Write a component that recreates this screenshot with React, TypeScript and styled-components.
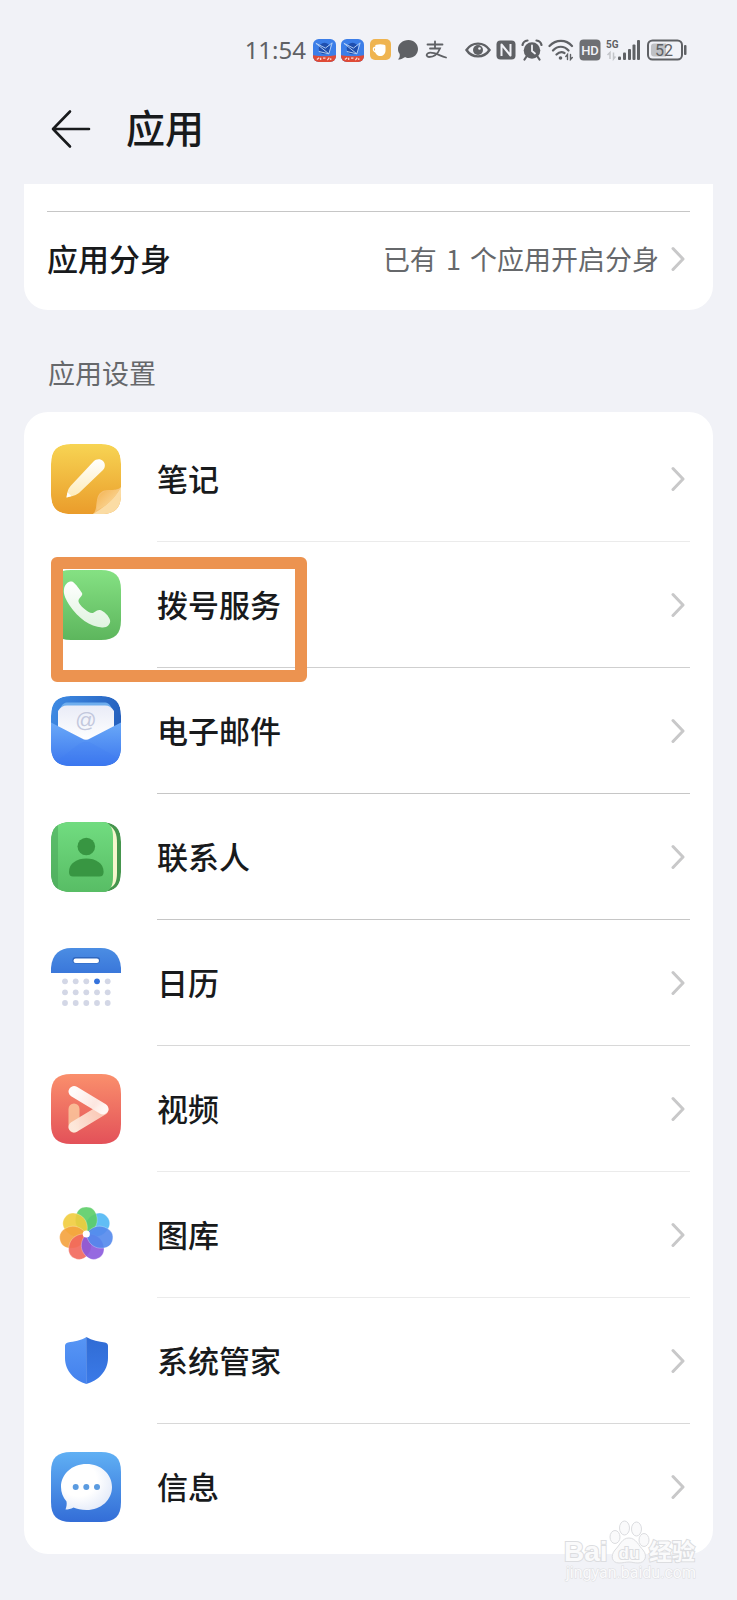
import React from "react";
import styled, { createGlobalStyle } from "styled-components";

const GlobalStyle = createGlobalStyle`
  *, *::before, *::after { box-sizing: border-box; }
  body {
    margin: 0;
    background: #f1f2f7;
    color: #181a1c;
    font-family: "Noto Sans CJK SC", "Noto Sans", sans-serif;
  }
`;

const Page = styled.div`
  position: relative;
  display: flex;
  flex-direction: column;
  padding: 0 24px 46px;
`;

const StatusBar = styled.div`
  display: flex;
  align-items: center;
  justify-content: flex-end;
  gap: 18px;
  padding-top: 32px;
  padding-right: 26px;
  height: 68px;
  color: #5f6165;
`;

const StatusGroup = styled.div`
  display: flex;
  align-items: center;
  gap: 5px;
  svg { display: block; flex: none; }
`;

const Clock = styled.time`
  margin-right: 2px;
  font-family: "Noto Sans", sans-serif;
  font-size: 24px;
  line-height: 36px;
`;

const Header = styled.header`
  display: flex;
  align-items: center;
  gap: 34px;
  height: 116px;
  padding: 6px 0 0 26px;
`;

const BackButton = styled.button`
  display: flex;
  padding: 0;
  border: 0;
  background: none;
  color: #181a1c;
`;

const Title = styled.h1`
  margin: 0;
  padding-bottom: 6px;
  font-size: 39px;
  line-height: 56px;
  font-weight: 500;
`;

const Card = styled.section<{ $clipped?: boolean }>`
  background: #fff;
  border-radius: ${(p) => (p.$clipped ? "0 0 24px 24px" : "24px")};
  padding: ${(p) => (p.$clipped ? "27px 23px 4px" : "4px 23px")};
`;

const CloneRow = styled.a`
  display: flex;
  align-items: center;
  height: 95px;
  padding-right: 5px;
  border-top: 1px solid #c6c6c6;
  color: inherit;
  text-decoration: none;
`;

const RowLabel = styled.span`
  flex: 1;
  padding-bottom: 2px;
  font-size: 31px;
  line-height: 44px;
  font-weight: 500;
`;

const RowValue = styled.span`
  margin-right: 12px;
  color: #66686b;
  font-size: 27px;
  line-height: 40px;
`;

const Count = styled.span`
  padding: 0 3px;
`;

const SectionTitle = styled.h2`
  margin: 0;
  padding: 43px 24px 19px;
  color: #66686b;
  font-size: 27px;
  line-height: 40px;
  font-weight: 400;
`;

const List = styled.ul`
  margin: 0;
  padding: 0;
  list-style: none;
`;

const Item = styled.li`
  position: relative;
`;

const AppLink = styled.a`
  display: flex;
  align-items: center;
  gap: 36px;
  height: 126px;
  padding-left: 4px;
  color: inherit;
  text-decoration: none;
  > svg { display: block; flex: none; }
`;

const RowBody = styled.span<{ $line: string }>`
  display: flex;
  flex: 1;
  align-items: center;
  align-self: stretch;
  padding-right: 5px;
  border-bottom: 1px solid ${(p) => p.$line};
`;

const Highlight = styled.span`
  position: absolute;
  top: 15px;
  left: 4px;
  width: 256px;
  height: 125px;
  border: 12px solid #ec9350;
  border-radius: 6px;
  z-index: 1;
  pointer-events: none;
`;

const Watermark = styled.svg`
  position: absolute;
  right: 36px;
  bottom: 16px;
  pointer-events: none;
`;

const Chevron = () => (
  <svg width="14" height="26" viewBox="0 0 14 26" fill="none" stroke="#c8c8c9" strokeWidth="3" strokeLinecap="round" strokeLinejoin="round" aria-hidden="true">
    <path d="M2 2.500 12 13 2 23.500" />
  </svg>
);

const TILE = "M20 0H50C64 0 70 6 70 20V50C70 64 64 70 50 70H20C6 70 0 64 0 50V20C0 6 6 0 20 0Z";

const Gradient = ({ id, from, to, x2 = 0, y2 = 1 }: { id: string; from: string; to: string; x2?: number; y2?: number }) => (
  <linearGradient id={id} x1="0" y1="0" x2={x2} y2={y2}>
    <stop offset="0" stopColor={from} />
    <stop offset="1" stopColor={to} />
  </linearGradient>
);

const Tile = ({ children }: { children: React.ReactNode }) => (
  <svg width="70" height="70" viewBox="0 0 70 70" aria-hidden="true">
    {children}
  </svg>
);

const NotesIcon = () => (
  <Tile>
    <defs>
      <Gradient id="nBg" from="#f7d453" to="#ea9c2b" />
      <Gradient id="nPen" from="#ffffff" to="#fdebb8" />
      <Gradient id="nFold" from="#f3b04c" to="#fde2ae" x2={1} />
      <clipPath id="nClip"><path d={TILE} /></clipPath>
    </defs>
    <g clipPath="url(#nClip)">
      <path d={TILE} fill="url(#nBg)" />
      <path d="M42 70C46 66 45 60 46 56C47 49 51 46 58 46C63 46 67 46 70 43V70Z" fill="#f5c070" />
      <path d="M42 70C51 65 64 55 70 43V70Z" fill="#fbdca4" />
      <path d="M46 66C45 55 48 48 58 46C64 46 67 46 69 44C64 55 55 62 46 66Z" fill="url(#nFold)" />
    </g>
    <path d="M15.500 53.500C16.500 47 17 45 20 41.500L42.500 17.500C45 14.800 49.500 14.500 52 17C54.500 19.500 54.500 23.500 52 26L28.500 48.500C25 51.500 22 52 15.500 53.500Z" fill="url(#nPen)" />
    <path d="M15.500 53.500L16.500 48.500L20.500 52Z" fill="#fff" />
  </Tile>
);

const DialerIcon = () => (
  <Tile>
    <defs>
      <Gradient id="dBg" from="#85e183" to="#5db65d" />
      <Gradient id="dH" from="#ffffff" to="#dff3df" />
    </defs>
    <path d={TILE} fill="url(#dBg)" />
    <path d="M13 19C14 13 19 10.500 22 12C25 14 29 20 31 23C32.500 26 27 28 27.500 31.500C28 35 37 43 41 43C44 43 45 39.500 49 40C53 41 58 46 59 50C60 54 56 58 51 57.500C39 56.500 27 48 19 36C15 30 12 24 13 19Z" fill="url(#dH)" />
  </Tile>
);

const MailIcon = () => (
  <Tile>
    <defs>
      <Gradient id="mBg" from="#3f8ce5" to="#2560bd" x2={1} y2={0.3} />
      <Gradient id="mFront" from="#6aa9f8" to="#3b76ee" />
      <Gradient id="mPaper" from="#e9ecf7" to="#ffffff" />
      <clipPath id="mClip"><path d={TILE} /></clipPath>
    </defs>
    <g clipPath="url(#mClip)">
      <path d={TILE} fill="url(#mBg)" />
      <path d="M9 13C11 8 13 6.500 17 6.500H53C57 6.500 59 8 61 13V32H9Z" fill="#6faeee" />
      <path d="M7 15C9 11.500 12 9.500 16 9.500H54C58 9.500 61 11.500 63 15V45H7Z" fill="url(#mPaper)" />
      <path d="M0 26.500L31 42.500Q35 45 39 42.500L70 26.500V70H0Z" fill="url(#mFront)" />
      <path d="M0 70L28 48Q35 43.500 42 48L70 64V70Z" fill="#3c78f3" opacity=".18" />
    </g>
    <text x="35" y="31" textAnchor="middle" fontFamily="Liberation Sans, sans-serif" fontSize="21" fill="#c3c8dd">@</text>
  </Tile>
);

const ContactsIcon = () => (
  <Tile>
    <defs>
      <Gradient id="cBg" from="#71dc80" to="#58bd65" />
      <clipPath id="cClip"><path d={TILE} /></clipPath>
    </defs>
    <g clipPath="url(#cClip)">
      <path d={TILE} fill="#45954d" />
      <path d="M57 3C64 6 66 12 66 21V50C66 60 64 64 57 67Z" fill="#f6f6cd" />
      <path d="M0 0H55C60 3 62 7 62 15V55C62 63 60 67 55 70H0Z" fill="url(#cBg)" />
      <path d="M0 0H7V70H0Z" fill="#48a257" opacity=".5" />
    </g>
    <circle cx="35.300" cy="24.500" r="8.800" fill="#389642" />
    <path d="M18 50C18 41 26 36.500 35.300 36.500S52.600 41 52.600 50Q52.600 54.500 48.500 54.500H22Q18 54.500 18 50Z" fill="#389642" />
  </Tile>
);

const CalendarIcon = () => (
  <Tile>
    <defs><Gradient id="kBg" from="#4b8de3" to="#3a77da" /></defs>
    <path d="M0 25V20C1 6 9 0 20 0H50C61 0 69 6 70 20V25Z" fill="url(#kBg)" />
    <rect x="21.500" y="9" width="27.500" height="6.500" rx="3.200" fill="#2f66bd" />
    <rect x="22.500" y="10.500" width="25.500" height="4.500" rx="2.200" fill="#fff" />
    {[33.3, 44.3, 55].map((y) =>
      [14, 24.7, 35.3, 46, 56.7].map((x) => (
        <circle key={`${x}-${y}`} cx={x} cy={y} r="2.900" fill={x === 46 && y === 33.3 ? "#3472dc" : "#d3d7e6"} />
      ))
    )}
  </Tile>
);

const VideoIcon = () => (
  <Tile>
    <defs>
      <Gradient id="vBg" from="#fa8f6c" to="#e35159" />
      <linearGradient id="vBar" gradientUnits="userSpaceOnUse" x1="23" y1="17" x2="53" y2="35">
        <stop offset="0" stopColor="#fff" />
        <stop offset=".7" stopColor="#fdeae4" />
        <stop offset="1" stopColor="#fff8f5" />
      </linearGradient>
      <linearGradient id="vLow" gradientUnits="userSpaceOnUse" x1="23" y1="53" x2="53" y2="35">
        <stop offset="0" stopColor="#fdeade" />
        <stop offset="1" stopColor="#fbc9b5" />
      </linearGradient>
    </defs>
    <path d={TILE} fill="url(#vBg)" />
    <g fill="none" strokeWidth="11" strokeLinecap="round">
      <path d="M23 35V53" stroke="#f9c29a" opacity=".9" />
      <path d="M23 53L52 35.500" stroke="url(#vLow)" opacity=".95" />
      <path d="M23 17.500L52 35" stroke="url(#vBar)" opacity=".97" />
    </g>
  </Tile>
);

const petals = [
  ["#50b7f4", 51], ["#5cce68", 0], ["#f1cd3e", -51], ["#f5a33e", -103],
  ["#f2685c", -154], ["#8a59dd", 154], ["#5489ed", 103],
] as const;

const GalleryIcon = () => (
  <Tile>
    {petals.map(([color, angle]) => (
      <g key={color} transform={`rotate(${angle} 35.300 34)`}>
        <path d="M35.300 34C27 31 23.500 24 24.500 18C25.500 10 30 7 35.300 7S45 10 46.100 18C47 24 43.500 31 35.300 34Z" fill={color} opacity=".9" stroke="#fff" strokeOpacity=".35" strokeWidth=".8" />
      </g>
    ))}
    <circle cx="35.300" cy="34" r="3.600" fill="#fff" />
  </Tile>
);

const ManagerIcon = () => (
  <Tile>
    <defs>
      <Gradient id="sL" from="#5796f5" to="#4381ed" />
      <Gradient id="sR" from="#306cd4" to="#3b7ae8" />
    </defs>
    <path d="M35.500 11C30 14.500 23 15.500 17 16.500Q14 17 14 20V32C14 45 24 55 35.500 58Z" fill="url(#sL)" />
    <path d="M35.300 11C41 14.500 48 15.500 54 16.500Q57 17 57 20V32C57 45 47 55 35.300 58Z" fill="url(#sR)" />
  </Tile>
);

const MessagesIcon = () => (
  <Tile>
    <defs>
      <Gradient id="gBg" from="#60b0f4" to="#336dd7" />
      <radialGradient id="gB" cx=".35" cy=".35" r=".7">
        <stop offset=".5" stopColor="#fff" />
        <stop offset="1" stopColor="#e6ecf9" />
      </radialGradient>
    </defs>
    <path d={TILE} fill="url(#gBg)" />
    <path d="M35.500 12C50 12 61 22 61 35S50 58 35.500 58C30 58 26 57 22.500 55.500C20 57 17 57.500 14.500 57.500C15.500 55 16 52 15.500 49.500C12 45.500 10 40.500 10 35C10 22 21 12 35.500 12Z" fill="url(#gB)" />
    {[24.7, 35.3, 46].map((x) => <circle key={x} cx={x} cy="35" r="3" fill="#5b9be0" />)}
  </Tile>
);

const NewsIcon = ({ id }: { id: string }) => (
  <svg width="23" height="23" viewBox="0 0 24 24" aria-hidden="true">
    <defs><clipPath id={id}><rect width="24" height="24" rx="6" /></clipPath></defs>
    <g clipPath={`url(#${id})`}>
      <rect width="24" height="24" fill="#3c7ee8" />
      <circle cx="12" cy="10" r="6" fill="#1f4fae" />
      <path d="M3 4.500L13 9.500L20 4L16.500 15.500L3 4.500M6 13L16.500 15.500" fill="none" stroke="#b5cff3" strokeWidth="1" />
      <path d="M0 17Q12 19 24 17V24H0Z" fill="#df4b37" />
      <path d="M4 21.500L6.500 19.500M8 22V19.500M10.500 20H13M15 22L17 19.500M18.500 20V22" stroke="#fbd9d0" strokeWidth="1.300" />
    </g>
  </svg>
);

const CupIcon = () => (
  <svg width="23" height="22" viewBox="0 0 23 22" aria-hidden="true">
    <rect x="1" width="21" height="21" rx="5" fill="#efb450" />
    <path d="M6 7.500H16.500V11.500C16.500 15 14 17 11.300 17S6 15 6 11.500Z" fill="#fff" />
    <path d="M6 8.500Q4 8.500 4.500 11Q5 13 7.500 13" fill="none" stroke="#fff" strokeWidth="1.300" />
    <ellipse cx="11.300" cy="7" rx="5.200" ry="1.800" fill="#fff" />
  </svg>
);

const BubbleIcon = () => (
  <svg width="23" height="22" viewBox="0 0 23 22" fill="currentColor" aria-hidden="true">
    <path d="M11.500 1C17 1 21 5 21 10S17 19 11.500 19C10 19 9 18.800 7.500 18.200C5.500 19.800 3.500 20.500 1 20.500C2.500 19 3 17.500 2.700 15C1.500 13.500 1 12 1 10C1 5 5.500 1 11.500 1Z" />
  </svg>
);

const PayIcon = () => (
  <svg width="22" height="20" viewBox="0 0 22 20" fill="none" stroke="currentColor" strokeWidth="1.800" strokeLinecap="round" aria-hidden="true">
    <path d="M2.500 4.500H17.500M10 1.500V8M5 8.500H15C13 13.500 9 17 4 17C1.500 17 .8 14.500 3 13.200C7 11 13 15 21 17.500" />
  </svg>
);

const EyeIcon = () => (
  <svg width="26" height="18" viewBox="0 0 26 18" aria-hidden="true">
    <path d="M1.500 9C7 .5 19 .5 24.500 9C19 17.500 7 17.500 1.500 9Z" fill="none" stroke="currentColor" strokeWidth="2.400" />
    <circle cx="13" cy="9" r="5" fill="currentColor" />
    <circle cx="14.500" cy="7.500" r="1.300" fill="#f1f2f7" />
  </svg>
);

const NfcIcon = () => (
  <svg width="20" height="20" viewBox="0 0 20 20" aria-hidden="true">
    <rect x=".5" y=".5" width="19" height="19" rx="4" fill="currentColor" />
    <path d="M5.500 16V4.500L14.500 15.500V4" fill="none" stroke="#f1f2f7" strokeWidth="2" strokeLinejoin="round" />
  </svg>
);

const AlarmIcon = () => (
  <svg width="22" height="22" viewBox="0 0 22 22" aria-hidden="true">
    <circle cx="11" cy="11.500" r="8.300" fill="currentColor" />
    <path d="M1.500 6C2 3.500 4 1.800 6.500 1.500M20.500 6C20 3.500 18 1.800 15.500 1.500M5.500 17.500L3.500 20.500M16.500 17.500L18.500 20.500" fill="none" stroke="currentColor" strokeWidth="2.200" strokeLinecap="round" />
    <path d="M11 6.500V12L14 14.500" fill="none" stroke="#f1f2f7" strokeWidth="1.800" strokeLinecap="round" />
  </svg>
);

const WifiIcon = () => (
  <svg width="26" height="22" viewBox="0 0 26 22" fill="none" stroke="currentColor" strokeLinecap="round" aria-hidden="true">
    <path d="M1.500 7C8 .2 18 .2 24 7M5 11.500C9.500 6.500 16 6.500 20.500 11.500M8.500 15.500C11 13 14 12.500 16.500 14" strokeWidth="2.200" />
    <circle cx="12.500" cy="19" r="1.800" fill="currentColor" stroke="none" />
    <path d="M19.500 20.500V15.500L17.800 17.500M22.500 15.500V20.500L24.300 18.500" strokeWidth="1.400" />
  </svg>
);

const HdIcon = () => (
  <svg width="22" height="22" viewBox="0 0 22 22" role="img" aria-label="HD">
    <rect x=".5" y=".5" width="21" height="21" rx="4" fill="#6d6f73" />
    <text x="11" y="16" textAnchor="middle" fontFamily="Roboto, sans-serif" fontWeight="500" fontSize="13" fill="#f1f2f7">HD</text>
  </svg>
);

const SignalIcon = () => (
  <svg width="36" height="22" viewBox="0 0 36 22" fill="currentColor" role="img" aria-label="5G">
    <text x="0" y="9" fontFamily="Roboto, sans-serif" fontWeight="700" fontSize="10">5G</text>
    <path d="M4 20V13.500L1.500 16M7.500 13.500V20L9.500 17.500" fill="none" stroke="#c3c5c9" strokeWidth="1.500" />
    <rect x="12" y="17.500" width="3" height="3.500" rx="1" />
    <rect x="17" y="13.500" width="3" height="7.500" rx="1" />
    <rect x="22" y="10" width="3" height="11" rx="1" />
    <rect x="26.500" y="5.500" width="3" height="15.500" rx="1" />
    <rect x="31" y="1" width="3" height="20" rx="1" />
  </svg>
);

const BatteryIcon = () => (
  <svg width="40" height="22" viewBox="0 0 40 22" role="img" aria-label="52%">
    <rect x="1" y="1.500" width="34" height="19" rx="4.500" fill="none" stroke="currentColor" strokeWidth="2" />
    <path d="M7 4.500H19V17.500H7Q4 17.500 4 14.500V7.500Q4 4.500 7 4.500Z" fill="#bfc1c5" />
    <rect x="37" y="6" width="2.500" height="10" rx="1" fill="currentColor" />
    <text x="17" y="17" textAnchor="middle" fontFamily="Roboto, sans-serif" fontSize="16" fill="currentColor">52</text>
  </svg>
);

const apps: { name: string; line: string; Icon: () => React.ReactElement; marked?: boolean }[] = [
  { name: "笔记", line: "#ebebeb", Icon: NotesIcon },
  { name: "拨号服务", line: "#cfcfcf", Icon: DialerIcon, marked: true },
  { name: "电子邮件", line: "#c6c6c6", Icon: MailIcon },
  { name: "联系人", line: "#c6c6c6", Icon: ContactsIcon },
  { name: "日历", line: "#d8d8d8", Icon: CalendarIcon },
  { name: "视频", line: "#ebebeb", Icon: VideoIcon },
  { name: "图库", line: "#ebebeb", Icon: GalleryIcon },
  { name: "系统管家", line: "#d8d8d8", Icon: ManagerIcon },
  { name: "信息", line: "transparent", Icon: MessagesIcon },
];

export default function App() {
  return (
    <>
      <GlobalStyle />
      <Page>
        <StatusBar>
          <StatusGroup>
            <Clock>11:54</Clock>
            <NewsIcon id="newsA" />
            <NewsIcon id="newsB" />
            <CupIcon />
            <BubbleIcon />
            <PayIcon />
          </StatusGroup>
          <StatusGroup>
            <EyeIcon />
            <NfcIcon />
            <AlarmIcon />
            <WifiIcon />
            <HdIcon />
            <SignalIcon />
            <BatteryIcon />
          </StatusGroup>
        </StatusBar>
        <Header>
          <BackButton aria-label="返回">
            <svg width="42" height="40" viewBox="0 0 42 40" fill="none" stroke="currentColor" strokeWidth="2.600" strokeLinecap="round" strokeLinejoin="round">
              <path d="M20 2.500L3 20L20 37.500M3 20H39" />
            </svg>
          </BackButton>
          <Title>应用</Title>
        </Header>
        <Card $clipped>
          <CloneRow href="#clone">
            <RowLabel>应用分身</RowLabel>
            <RowValue>已有 <Count>1</Count> 个应用开启分身</RowValue>
            <Chevron />
          </CloneRow>
        </Card>
        <SectionTitle>应用设置</SectionTitle>
        <Card>
          <List>
            {apps.map(({ name, line, Icon, marked }) => (
              <Item key={name}>
                <AppLink href="#app">
                  <Icon />
                  <RowBody $line={line}>
                    <RowLabel>{name}</RowLabel>
                    <Chevron />
                  </RowBody>
                </AppLink>
                {marked && <Highlight />}
              </Item>
            ))}
          </List>
        </Card>
        <Watermark width="140" height="66" viewBox="0 0 140 66" role="img" aria-label="Baidu 经验">
          <g fill="#fafafb" stroke="#dcdde0" strokeWidth="1">
            <ellipse cx="54" cy="19" rx="5" ry="6.500" />
            <ellipse cx="63.500" cy="10" rx="5" ry="7" />
            <ellipse cx="75.500" cy="11" rx="5" ry="7" />
            <ellipse cx="83" cy="22" rx="5" ry="6.500" />
            <path d="M68 20C75 20 78 28 82 32C87 38 84 45 77 45C73 45 71 44 68 44S62 45 58 45C51 45 49 38 54 32C59 27 61 20 68 20Z" />
            <g strokeWidth="2" paintOrder="stroke">
              <text x="3" y="43" fontFamily="Liberation Sans, sans-serif" fontWeight="700" fontSize="28">Bai</text>
              <text x="68" y="41" textAnchor="middle" fontFamily="Liberation Sans, sans-serif" fontWeight="700" fontSize="17">du</text>
              <text x="88" y="42" fontFamily="Noto Sans CJK SC, sans-serif" fontWeight="700" fontSize="23">经验</text>
            </g>
            <text x="5" y="60" fontFamily="Roboto, sans-serif" fontSize="16" paintOrder="stroke" strokeWidth="1">jingyan.baidu.com</text>
          </g>
        </Watermark>
      </Page>
    </>
  );
}
